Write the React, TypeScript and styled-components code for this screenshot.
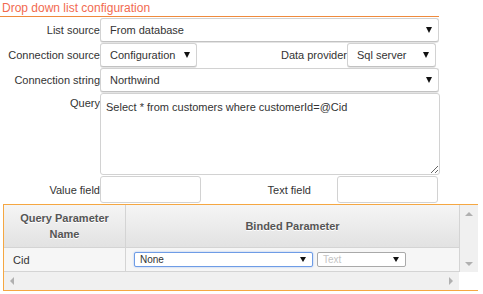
import React from 'react'
import { createGlobalStyle, styled } from 'styled-components'

const GlobalStyle = createGlobalStyle`
  html, body {
    margin: 0;
    padding: 0;
    background: #fff;
  }
  body {
    font-family: 'Liberation Sans', Arial, sans-serif;
    font-size: 11px;
    color: #333;
  }
`

const Page = styled.div`
  width: 483px;
  height: 294px;
  overflow: hidden;
`

const Title = styled.div`
  width: 437px;
  height: 16px;
  padding-left: 2px;
  font-size: 12px;
  line-height: 17px;
  color: #f26a50;
  border-bottom: 1px solid #ef8a3c;
  margin-bottom: 1px;
`

const FormRow = styled.div<{ $height?: number }>`
  display: flex;
  align-items: center;
  width: 439px;
  height: ${p => p.$height ?? 24}px;
  margin-bottom: 1px;
`

const Label = styled.div<{ $width?: number }>`
  width: ${p => p.$width ?? 100}px;
  flex-shrink: 0;
  text-align: right;
  white-space: nowrap;
  box-sizing: border-box;
`

const Spacer = styled.div<{ $width?: number }>`
  flex: ${p => (p.$width ? `0 0 ${p.$width}px` : '1')};
`

const SelectBox = styled.div<{ $width: number }>`
  box-sizing: border-box;
  width: ${p => p.$width}px;
  flex-shrink: 0;
  height: 100%;
  display: flex;
  align-items: center;
  justify-content: space-between;
  padding: 0 6px 0 9px;
  border: 1px solid #d2d2d2;
  border-bottom-color: #c2c2c2;
  border-radius: 3px;
  box-shadow: 0 1px 0 #e4e4e4;
  background: #fff;
  color: #333;
`

const Caret = styled.span<{ $size?: number; $color?: string }>`
  width: 0;
  height: 0;
  border-left: ${p => (p.$size ?? 7) / 2}px solid transparent;
  border-right: ${p => (p.$size ?? 7) / 2}px solid transparent;
  border-top: ${p => (p.$size ?? 7) - 1}px solid ${p => p.$color ?? '#111'};
`

const QueryRow = styled.div`
  display: flex;
  align-items: flex-start;
  margin-bottom: 1px;
`

const QueryLabel = styled(Label)`
  padding-top: 4px;
`

const QueryText = styled.textarea`
  box-sizing: border-box;
  width: 340px;
  height: 82px;
  margin: 0;
  padding: 7px 5px;
  border: 1px solid #d2d2d2;
  border-radius: 3px;
  font-family: 'Liberation Sans', Arial, sans-serif;
  font-size: 11px;
  color: #333;
  resize: vertical;
  outline: none;
`

const TextInput = styled.div<{ $width: number }>`
  box-sizing: border-box;
  width: ${p => p.$width}px;
  flex-shrink: 0;
  height: 100%;
  border: 1px solid #d2d2d2;
  border-radius: 3px;
  background: #fff;
`

const Grid = styled.div`
  margin: 1px 0 0 3px;
  width: 474px;
  border-top: 1px solid #f5a742;
  border-left: 1px solid #f5a742;
  border-bottom: 1px solid #f5a742;
  display: flex;
  flex-direction: column;
`

const GridBody = styled.div`
  display: flex;
`

const Table = styled.div`
  width: 455px;
  border-right: 1px solid #d4d4d4;
  display: grid;
  grid-template-columns: 122px 1fr;
`

const HeadCell = styled.div<{ $last?: boolean }>`
  height: 42px;
  display: flex;
  align-items: center;
  justify-content: center;
  text-align: center;
  font-weight: bold;
  line-height: 16px;
  color: #555;
  text-shadow: 0 1px 0 #fff;
  background: linear-gradient(#f5f5f5, #e2e2e2);
  border-bottom: 1px solid #d4d4d4;
  border-right: ${p => (p.$last ? 'none' : '1px solid #d4d4d4')};
`

const Cell = styled.div<{ $last?: boolean }>`
  height: 23px;
  display: flex;
  align-items: center;
  gap: 4px;
  padding-left: ${p => (p.$last ? 8 : 9)}px;
  background: #f6f6f6;
  border-bottom: 1px solid #d4d4d4;
  border-right: ${p => (p.$last ? 'none' : '1px solid #d4d4d4')};
`

const MiniSelect = styled.div<{ $width: number; $focused?: boolean }>`
  box-sizing: border-box;
  width: ${p => p.$width}px;
  height: 15px;
  display: flex;
  align-items: center;
  justify-content: space-between;
  padding: 0 6px 0 5px;
  font-size: 10px;
  background: #fff;
  border-radius: 2px;
  border: 1px solid ${p => (p.$focused ? '#6e9ce6' : '#a9a9a9')};
  box-shadow: ${p => (p.$focused ? '0 0 2px #9dbcf0' : 'none')};
  color: ${p => (p.$focused ? '#333' : '#c4c4c4')};
`

const VScroll = styled.div`
  width: 18px;
  background: #f0f0f0;
  display: flex;
  flex-direction: column;
  justify-content: space-between;
  align-items: center;
  padding: 7px 0 6px;
  box-sizing: border-box;
`

const HScrollRow = styled.div`
  display: flex;
  height: 18px;
`

const HScroll = styled.div`
  width: 455px;
  background: #f0f0f0;
  display: flex;
  align-items: center;
  justify-content: space-between;
  padding: 0 6px 0 6px;
  box-sizing: border-box;
`

const Corner = styled.div`
  flex: 1;
  background: #fff;
`

const Arrow = styled.span<{ $dir: 'up' | 'down' | 'left' | 'right' }>`
  width: 0;
  height: 0;
  ${p =>
    p.$dir === 'up'
      ? 'border-left: 4px solid transparent; border-right: 4px solid transparent; border-bottom: 4px solid #b0b0b0;'
      : p.$dir === 'down'
        ? 'border-left: 4px solid transparent; border-right: 4px solid transparent; border-top: 4px solid #b0b0b0;'
        : p.$dir === 'left'
          ? 'border-top: 4px solid transparent; border-bottom: 4px solid transparent; border-right: 4px solid #b0b0b0;'
          : 'border-top: 4px solid transparent; border-bottom: 4px solid transparent; border-left: 4px solid #b0b0b0;'}
`

const App = () => {
  return (
    <Page>
      <GlobalStyle />
      <Title>Drop down list configuration</Title>

      <FormRow>
        <Label>List source</Label>
        <SelectBox $width={339}>
          From database
          <Caret />
        </SelectBox>
      </FormRow>

      <FormRow>
        <Label>Connection source</Label>
        <SelectBox $width={97}>
          Configuration
          <Caret />
        </SelectBox>
        <Spacer />
        <Label $width={120}>Data provider</Label>
        <SelectBox $width={89}>
          Sql server
          <Caret />
        </SelectBox>
        <Spacer $width={3} />
      </FormRow>

      <FormRow>
        <Label>Connection string</Label>
        <SelectBox $width={339}>
          Northwind
          <Caret />
        </SelectBox>
      </FormRow>

      <QueryRow>
        <QueryLabel>Query</QueryLabel>
        <QueryText readOnly value='Select * from customers where customerId=@Cid' />
      </QueryRow>

      <FormRow $height={27}>
        <Label>Value field</Label>
        <TextInput $width={101} />
        <Label $width={136} style={{ paddingRight: 26 }}>
          Text field
        </Label>
        <TextInput $width={101} />
      </FormRow>

      <Grid>
        <GridBody>
          <Table>
            <HeadCell>
              Query Parameter
              <br />
              Name
            </HeadCell>
            <HeadCell $last>Binded Parameter</HeadCell>
            <Cell>Cid</Cell>
            <Cell $last>
              <MiniSelect $width={179} $focused>
                None
                <Caret $size={6} />
              </MiniSelect>
              <MiniSelect $width={89}>
                Text
                <Caret $size={6} />
              </MiniSelect>
            </Cell>
          </Table>
          <VScroll>
            <Arrow $dir='up' />
            <Arrow $dir='down' />
          </VScroll>
        </GridBody>
        <HScrollRow>
          <HScroll>
            <Arrow $dir='left' />
            <Arrow $dir='right' />
          </HScroll>
          <Corner />
        </HScrollRow>
      </Grid>
    </Page>
  )
}

export default App
